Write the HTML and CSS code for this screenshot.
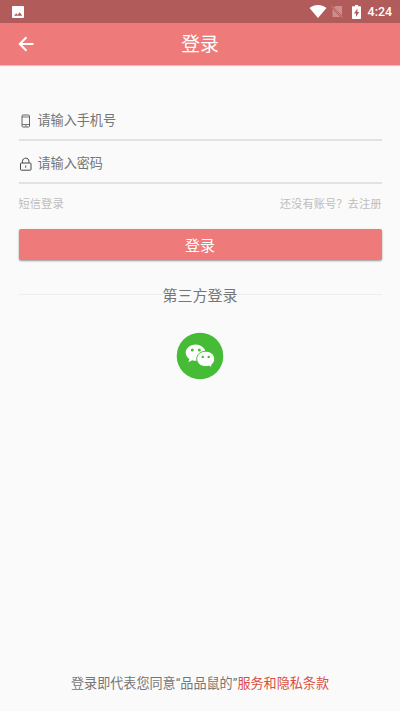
FILE: index.html
```html
<!DOCTYPE html>
<html lang="zh-CN">
<head>
<meta charset="utf-8">
<meta name="viewport" content="width=device-width, initial-scale=1">
<title>登录</title>
<link rel="stylesheet" href="styles.css">
</head>
<body>
<div class="screen">
  <div class="status">
    <svg class="status-picture" viewBox="0 0 12 12"><path fill="#fff" fill-rule="evenodd" d="M1 0h10a1 1 0 0 1 1 1v10a1 1 0 0 1-1 1H1a1 1 0 0 1-1-1V1a1 1 0 0 1 1-1zM2 9.800h8.300L7.700 6.200 5.600 8.900 4.200 7.200z"/></svg>
    <div class="status-right">
      <svg class="wifi" viewBox="0 0 18 13"><path fill="#fff" d="M9 13L.5 3C3 1 5.800 0 9 0s6 1 8.500 3z"/></svg>
      <svg class="sim" viewBox="0 0 12 13"><path fill="#cd8e8e" d="M4.500 1H11v9.500L3 2.500zM1.500 4L9.300 12H1.500z"/><path stroke="#cd8e8e" d="M.5 1l11 11.500"/></svg>
      <svg class="battery" viewBox="0 0 9 14"><path fill="#fff" fill-rule="evenodd" d="M3 0h3v1.300h2.300q.7 0 .7.700v11.300q0 .7-.7.700H.7Q0 14 0 13.300V2q0-.7.700-.7H3zM5.400 3.500L2 8.500h2V12l3.200-5H5.400z"/></svg>
      <span class="clock">4:24</span>
    </div>
  </div>
  <header class="bar">
    <svg class="back" viewBox="0 0 16 16"><path fill="none" stroke="#fff" stroke-width="2" d="M15.500 8H2M8.500 1.200L1.700 8l6.800 6.800"/></svg>
    <h1 class="title">登录</h1>
  </header>
  <main class="content">
    <label class="field">
      <svg class="field-icon" viewBox="0 0 14 14"><g fill="none" stroke="#555"><rect x="3" y="1" width="7.500" height="12" rx="1" stroke-width=".9"/><path stroke-width=".8" d="M3 3h7.500M3 10.500h7.500M5.800 11.900h2"/></g></svg>
      <span>请输入手机号</span>
    </label>
    <label class="field">
      <svg class="field-icon" viewBox="0 0 14 14"><g fill="none" stroke="#484848"><rect x="1.500" y="6" width="10.500" height="7.200" rx=".8"/><path d="M3.500 6V4.300C3.500 2.300 4.800 1.200 6.700 1.200s3.200 1.100 3.200 3.100V6M6.700 8.500v2.200"/></g></svg>
      <span>请输入密码</span>
    </label>
    <div class="links"><span>短信登录</span><span>还没有账号？去注册</span></div>
    <button class="submit">登录</button>
    <div class="divider"><span>第三方登录</span></div>
    <svg class="wechat" viewBox="0 0 48 48">
      <circle cx="24" cy="24" r="23.300" fill="#46bb36"/>
      <path fill="#fff" d="M19.600 12.500c-5.500 0-9.900 3.700-9.900 8.200 0 2.600 1.400 4.800 3.700 6.300l-1.100 3.200 3.900-2c1.100.4 2.200.6 3.400.6 5.500 0 9.900-3.600 9.900-8.100s-4.400-8.200-9.900-8.200z"/>
      <path fill="#fff" stroke="#46bb36" stroke-width="1" d="M29.700 19.200c-5 0-9 3.400-9 7.700s4 7.700 9 7.700c1.200 0 2.300-.2 3.300-.5l3.300 1.900-.9-3c2-1.400 3.300-3.600 3.300-6.100 0-4.300-4-7.700-9-7.700z"/>
      <g fill="#46bb36"><circle cx="16.300" cy="18" r="1.500"/><circle cx="23.300" cy="18" r="1.500"/><circle cx="26.800" cy="24.900" r="1.200"/><circle cx="32.700" cy="24.900" r="1.200"/></g>
    </svg>
  </main>
  <footer class="terms">登录即代表您同意“品品鼠的”<span class="terms-link">服务和隐私条款</span></footer>
</div>
</body>
</html>
```

FILE: styles.css
```css
* { box-sizing: border-box; }
body {
  margin: 0;
  background: #fafafa;
  font-family: Roboto, "Noto Sans CJK SC", sans-serif;
  color: #757575;
}
svg { display: block; flex: none; }
.screen { height: 711px; display: flex; flex-direction: column; overflow: hidden; }
.status {
  flex: none;
  height: 23px;
  padding: 0 8px 0 12px;
  display: flex;
  align-items: center;
  justify-content: space-between;
  background: #b15b5a;
}
.status-picture { width: 12px; height: 12px; }
.status-right { display: flex; align-items: center; }
.wifi { width: 18px; height: 13px; margin-right: 4px; }
.sim { width: 12px; height: 13px; margin-right: 9px; }
.battery { width: 9px; height: 14px; margin-right: 7px; }
.clock { color: #fff; font-size: 12.4px; font-weight: 500; line-height: 23px; }
.bar {
  flex: none;
  height: 42px;
  padding: 0 18px;
  display: grid;
  grid-template-columns: 16px 1fr 16px;
  align-items: center;
  background: #ee7a79;
  box-shadow: 0 1px 1px #ccc;
}
.back { width: 16px; height: 16px; }
.title {
  margin: 0;
  padding-top: 3px;
  color: #fff;
  font-size: 18.8px;
  font-weight: 400;
  line-height: 39px;
  text-align: center;
}
.content { flex: 1; padding: 33px 18.5px 0; display: flex; flex-direction: column; }
.field {
  height: 43px;
  padding-top: 5px;
  display: flex;
  align-items: center;
  gap: 5px;
  border-bottom: 2px solid #e2e2e2;
  font-size: 13.1px;
  line-height: 20px;
}
.field-icon { width: 14px; height: 14px; }
.links {
  display: flex;
  justify-content: space-between;
  padding-top: 12px;
  font-size: 11.3px;
  line-height: 18px;
  color: #bdbdbd;
}
.submit {
  height: 31px;
  margin: 14.500px 0 0;
  padding: 3px 0 0;
  border: 0;
  border-radius: 2px;
  background: #ee7a79;
  box-shadow: 0 1px 2px rgba(0, 0, 0, .4);
  color: #fff;
  font: inherit;
  font-size: 15px;
  line-height: 28px;
}
.divider {
  margin-top: 25px;
  display: flex;
  align-items: center;
  font-size: 15px;
  line-height: 22px;
}
.divider::before, .divider::after { content: ""; flex: 1; height: 1px; margin-bottom: 2px; background: #eee; }
.wechat { width: 48px; height: 48px; margin: 25px auto 0; }
.terms {
  flex: none;
  padding-bottom: 17px;
  text-align: center;
  font-size: 13.1px;
  line-height: 20px;
  white-space: nowrap;
}
.terms-link { color: #dc4e43; }
```
